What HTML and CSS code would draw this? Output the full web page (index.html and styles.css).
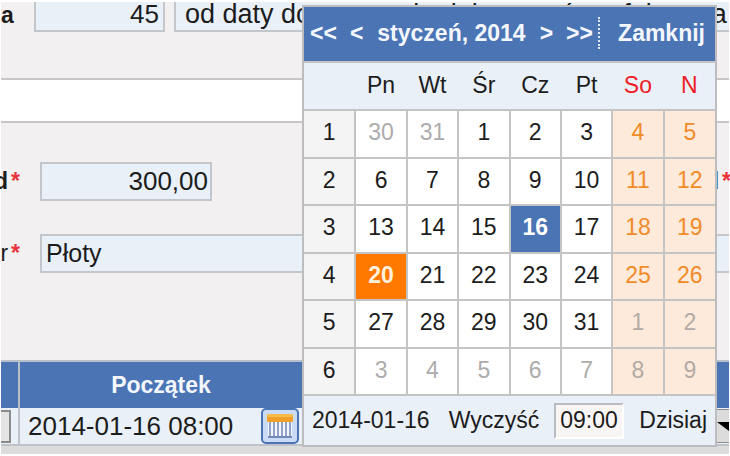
FILE: index.html
```html
<!DOCTYPE html>
<html lang="pl">
<head>
    <meta charset="UTF-8">
    <meta name="viewport" content="width=device-width, initial-scale=1.0">
    <title>Kalendarz</title>
    <link rel="stylesheet" href="styles.css">
</head>
<body>
    <div class="page">
        <form class="form">
            <section class="panel panel-top">
                <label class="label" for="days">a</label>
                <input class="field number days" id="days" type="text" value="45">
                <input class="field term" type="text" aria-label="Termin" value="od daty dostarczenia dokumentów z faktury a">
            </section>

            <section class="panel panel-main">
                <div class="row">
                    <label class="label" for="amount">d<span class="required">*</span></label>
                    <input class="field number amount" id="amount" type="text" value="300,00">
                    <span class="label label-right">d<span class="required">*</span></span>
                </div>
                <div class="row">
                    <label class="label label-light" for="city">r<span class="required">*</span></label>
                    <input class="field city" id="city" type="text" value="Płoty">
                </div>
            </section>

            <table class="dates">
                <thead>
                    <tr>
                        <th class="col-edge"></th>
                        <th class="col-start">Początek</th>
                        <th></th>
                    </tr>
                </thead>
                <tbody>
                    <tr>
                        <td class="cell-edge"><div class="edge-box"></div></td>
                        <td>
                            <div class="start">
                                <input class="start-input" type="text" aria-label="Początek" value="2014-01-16 08:00">
                                <button class="calendar-btn" type="button" aria-label="Kalendarz">
                                    <svg width="28" height="28" viewBox="0 0 28 28">
                                        <rect x="2" y="9" width="24" height="16" fill="#f4f8fe"/>
                                        <path d="M4 10v14M8 10v14M12 10v14M16 10v14M20 10v14M24 10v14" stroke="#8fa3c8" stroke-width="2" fill="none"/>
                                        <path d="M2 25h24" stroke="#7188b8" stroke-width="2"/>
                                        <rect x="1" y="2" width="26" height="8" rx="1" fill="#f0a029"/>
                                        <rect x="1" y="2" width="26" height="3" rx="1" fill="#f9bd4c"/>
                                    </svg>
                                </button>
                            </div>
                        </td>
                        <td class="cell-end">
                            <button class="drop-btn" type="button" aria-label="Rozwiń">
                                <svg width="14" height="9" viewBox="0 0 14 9"><path d="M2 0h12v9z" fill="#000"/></svg>
                            </button>
                        </td>
                    </tr>
                </tbody>
            </table>
        </form>

        <div class="calendar">
            <div class="calendar-header">
                <button class="nav" type="button">&lt;&lt;</button>
                <button class="nav" type="button">&lt;</button>
                <span class="month">styczeń, 2014</span>
                <button class="nav" type="button">&gt;</button>
                <button class="nav" type="button">&gt;&gt;</button>
                <button class="close" type="button">Zamknij</button>
            </div>

            <table class="days-table">
                <thead>
                    <tr><th></th><th>Pn</th><th>Wt</th><th>Śr</th><th>Cz</th><th>Pt</th><th class="red">So</th><th class="red">N</th></tr>
                </thead>
                <tbody>
                    <tr><th>1</th><td class="other">30</td><td class="other">31</td><td>1</td><td>2</td><td>3</td><td class="weekend">4</td><td class="weekend">5</td></tr>
                    <tr><th>2</th><td>6</td><td>7</td><td>8</td><td>9</td><td>10</td><td class="weekend">11</td><td class="weekend">12</td></tr>
                    <tr><th>3</th><td>13</td><td>14</td><td>15</td><td class="selected">16</td><td>17</td><td class="weekend">18</td><td class="weekend">19</td></tr>
                    <tr><th>4</th><td class="today">20</td><td>21</td><td>22</td><td>23</td><td>24</td><td class="weekend">25</td><td class="weekend">26</td></tr>
                    <tr><th>5</th><td>27</td><td>28</td><td>29</td><td>30</td><td>31</td><td class="weekend other">1</td><td class="weekend other">2</td></tr>
                    <tr><th>6</th><td class="other">3</td><td class="other">4</td><td class="other">5</td><td class="other">6</td><td class="other">7</td><td class="weekend other">8</td><td class="weekend other">9</td></tr>
                </tbody>
            </table>

            <div class="calendar-footer">
                <span class="current">2014-01-16</span>
                <button class="action clear" type="button">Wyczyść</button>
                <input class="time" type="text" aria-label="Godzina" value="09:00">
                <button class="action" type="button">Dzisiaj</button>
            </div>
        </div>
    </div>
</body>
</html>
```
FILE: styles.css
```css
* {
    box-sizing: border-box;
}

body {
    margin: 0;
    background-color: #fff;
    font-family: "Liberation Sans", Arial, sans-serif;
    font-size: 23px;
    color: #1c1c1c;
}

button, input {
    font-family: inherit;
    font-size: inherit;
    color: inherit;
}

button {
    padding: 0;
    border: none;
    background: none;
    cursor: pointer;
}

.page {
    position: relative;
    padding: 2px 1px;
    overflow: hidden;
}

.form {
    font-size: 26px;
    background-color: #dcdcdc;
    padding-bottom: 8px;
}

.panel {
    background-color: #f3f0f1;
}

.panel-top {
    display: flex;
    align-items: flex-start;
    height: 78px;
    border-bottom: 2px solid #c9c6c7;
}

.panel-main {
    display: flex;
    flex-direction: column;
    gap: 33px;
    padding: 39px 0 87px;
    border-top: 2px solid #c9c6c7;
}

/* white strip between the two panels */
.panel-top + .panel-main {
    margin-top: 41px;
    box-shadow: 0 -41px #fff;
}

.row {
    display: flex;
    align-items: center;
    height: 39px;
}

.label {
    display: flex;
    justify-content: flex-end;
    flex: none;
    width: 39px;
    padding-right: 20px;
    font-size: 23px;
    font-weight: bold;
}

.label-light {
    font-weight: normal;
}

.required {
    margin-left: 3px;
    color: #e8343a;
    font-weight: bold;
}

.label-right {
    justify-content: flex-start;
    width: 24px;
    margin-left: auto;
    padding-right: 0;
}

.field {
    height: 39px;
    padding: 0 4px;
    border: 2px solid #c3c6ca;
    background-color: #e9f0f8;
}

.number {
    text-align: right;
}

.panel-top .label {
    width: 33px;
    justify-content: flex-start;
}

.panel-top .field {
    height: 30px;
    padding-bottom: 4px;
    border-top: none;
}

.days {
    width: 131px;
}

.panel-top .term {
    flex: 1;
    min-width: 0;
    margin-left: 9px;
    padding-right: 0;
    padding-left: 9px;
    border-right: none;
    font-size: 27px;
}

.amount {
    width: 172px;
    padding: 0 2px;
}

.city {
    flex: 1;
    min-width: 0;
    border-right: none;
    font-size: 25px;
}

.dates {
    width: 100%;
    table-layout: fixed;
    border-collapse: collapse;
    background-color: #e9f0f8;
}

.dates th {
    height: 47px;
    padding: 0;
    border: 2px solid #b9bfc9;
    border-bottom: none;
    background-color: #4a74b4;
    color: #f3f7fd;
    font-size: 23px;
}

.dates td {
    height: 37px;
    padding: 0;
    border: 2px solid #bfc3c9;
    border-top: none;
}

.dates tr > :first-child {
    border-left: none;
}

.dates tr > :last-child {
    border-right: none;
}

.col-edge {
    width: 18px;
}

.col-start {
    width: 284px;
}

.edge-box {
    width: 10px;
    height: 33px;
    border: 2px solid #8b8b8b;
    border-left: none;
    background-color: #e4e4e4;
}

.start {
    display: flex;
    align-items: center;
    gap: 2px;
    padding-left: 8px;
}

.start-input {
    flex: 1;
    min-width: 0;
    padding: 0;
    border: none;
    background: none;
    font-size: 26px;
}

.calendar-btn {
    display: flex;
    align-items: center;
    justify-content: center;
    width: 38px;
    height: 36px;
    margin-right: 3px;
    border: 2px solid #4a74b4;
    border-radius: 5px;
    background-color: #c9dbf5;
}

.drop-btn {
    display: flex;
    align-items: center;
    justify-content: flex-end;
    width: 16px;
    height: 34px;
    margin-left: auto;
    border-top: 1px solid #8b8b8b;
    border-bottom: 1px solid #8b8b8b;
    background-color: #dcdcdc;
    overflow: hidden;
}

/* calendar popup */
.calendar {
    position: absolute;
    top: 5px;
    left: 302px;
    width: 415px;
    border: 2px solid #bdbdbf;
    background-color: #e9f0f8;
}

.calendar-header {
    display: flex;
    align-items: center;
    height: 54px;
    padding: 0 10px 2px 6px;
    background-color: #4a74b4;
    color: #f3f7fd;
    font-weight: bold;
}

.nav, .close {
    font-weight: bold;
}

.nav + .nav {
    margin-left: 13px;
}

.month {
    margin-left: 14px;
}

.month + .nav {
    margin-left: 14px;
}

.close {
    flex: 1;
    height: 32px;
    margin-left: 5px;
    border-left: 2px dotted #dfe8f5;
    text-align: right;
}

.days-table {
    width: 100%;
    height: 335px;
    table-layout: fixed;
    border-collapse: collapse;
    text-align: center;
}

.days-table th, .days-table td {
    padding: 0 0 2px;
    border: 2px solid #c4c4c4;
    font-weight: normal;
}

.days-table tr > :first-child {
    border-left: none;
}

.days-table tr > :last-child {
    border-right: none;
}

.days-table thead th {
    height: 48px;
    border-left: none;
    border-right: none;
}

.days-table tbody th {
    background-color: #f4f4f5;
}

.days-table tbody td {
    background-color: #fff;
}

.days-table .red {
    color: #ee1c25;
}

.days-table .other {
    color: #acacac;
}

.days-table tbody .weekend {
    background-color: #fdeada;
    color: #f08b28;
}

.days-table tbody .weekend.other {
    color: #b3aaa5;
}

.days-table tbody .selected {
    background-color: #4a74b4;
    color: #fff;
    font-weight: bold;
}

.days-table tbody .today {
    background-color: #ff7800;
    color: #fff0dc;
    font-weight: bold;
}

.calendar-footer {
    display: flex;
    align-items: center;
    justify-content: space-between;
    height: 49px;
    padding: 0 8px;
}

.clear {
    margin-left: 4px;
}

.time {
    width: 70px;
    height: 36px;
    padding: 0 4px;
    border: 2px solid #fff;
    border-top-color: #b9bcc0;
    border-left-color: #b9bcc0;
    background-color: #f8f6f5;
}
```
